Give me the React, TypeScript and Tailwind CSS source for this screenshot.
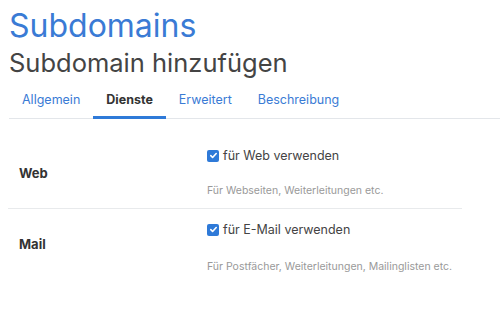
import React from 'react';

const tabs = ['Allgemein', 'Dienste', 'Erweitert', 'Beschreibung'];

const rows = [
  { label: 'Web', check: 'für Web verwenden', help: 'Für Webseiten, Weiterleitungen etc.' },
  { label: 'Mail', check: 'für E-Mail verwenden', help: 'Für Postfächer, Weiterleitungen, Mailinglisten etc.' },
];

const Checkbox: React.FC = () => (
  <span className="w-[12px] h-[12px] rounded-[2px] bg-[#2f7ad8] flex items-center justify-center shrink-0">
    <svg width="9" height="9" viewBox="0 0 10 10" fill="none">
      <path d="M2 5.2l2 2 4-4.4" stroke="white" strokeWidth="1.8" strokeLinecap="round" strokeLinejoin="round" />
    </svg>
  </span>
);

export default function App() {
  return (
    <div className="w-[500px] h-[315px] bg-white overflow-hidden font-['Inter',sans-serif]">
      <div className="px-[9px] pt-[6px]">
        <h1 className="text-[32px] leading-[40px] text-[#3a7bd5]">Subdomains</h1>
        <h2 className="text-[25.5px] leading-[32px] text-[#444] mt-[1px]">Subdomain hinzufügen</h2>
      </div>

      <div className="ml-[9px] mt-[12px] flex border-b border-[#e3e6ea] text-[12.5px]">
        {tabs.map((t) => (
          <div
            key={t}
            className={
              t === 'Dienste'
                ? 'px-[13px] pb-[6px] border-b-[3px] border-[#2f7ad8] -mb-px font-bold text-[#333]'
                : 'px-[13px] pb-[7px] text-[#3a7bd5]'
            }
          >
            {t}
          </div>
        ))}
      </div>

      <div className="ml-[8px] w-[454px] mt-[28px]">
        {rows.map((r, i) => (
          <div key={r.label} className={i === 0 ? 'flex items-center pb-[10px] border-b border-[#e8eaec]' : 'flex items-center pt-[12px]'}>
            <div className={i === 0 ? 'w-[199px] pl-[11px] text-[13px] font-bold text-[#333] pt-[2px]' : 'w-[199px] pl-[11px] text-[13px] font-bold text-[#333] pb-[5px]'}>
              {r.label}
            </div>
            <div>
              <div className="flex items-center gap-[4px] text-[12.5px] text-[#444] leading-[18px]">
                <Checkbox />
                <span>{r.check}</span>
              </div>
              <div className={i === 0 ? 'mt-[19px] text-[10.5px] text-[#999] leading-[14px]' : 'mt-[21px] text-[10.5px] text-[#999] leading-[14px]'}>
                {r.help}
              </div>
            </div>
          </div>
        ))}
      </div>
    </div>
  );
}
